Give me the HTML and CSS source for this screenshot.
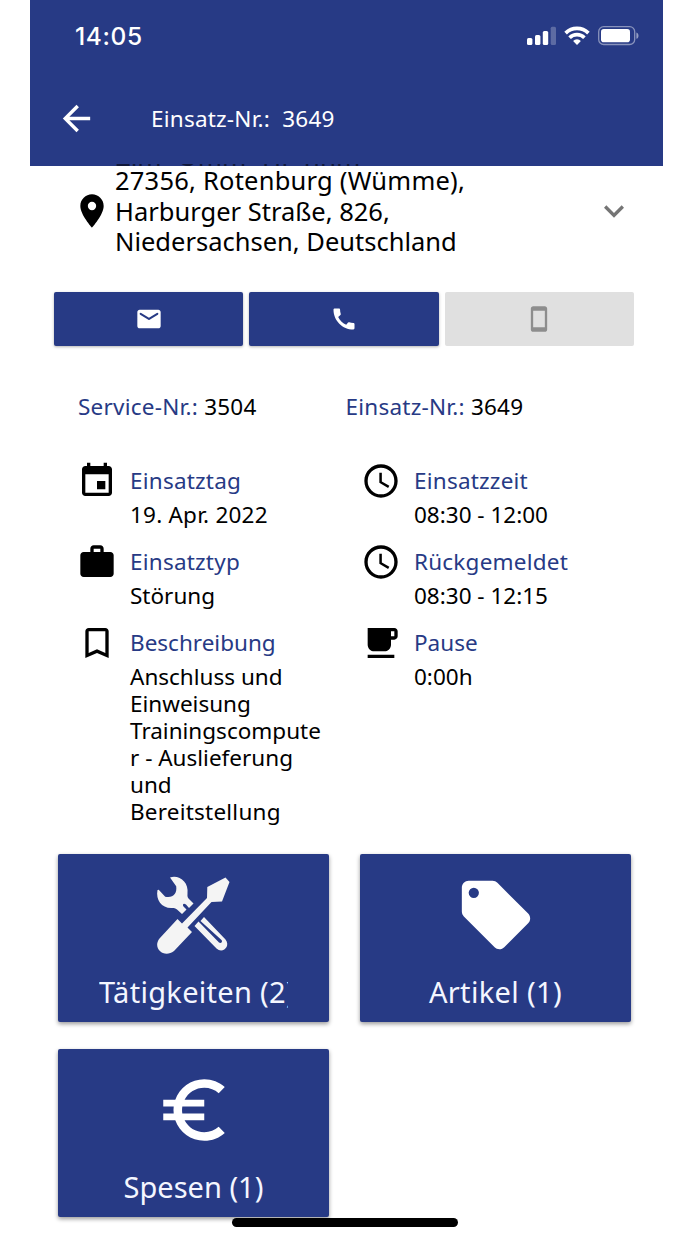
FILE: index.html
```html
<!DOCTYPE html>
<html lang="de">
<head>
  <meta charset="UTF-8">
  <title>Einsatz-Nr.: 3649</title>
  <meta name="viewport" content="width=device-width, initial-scale=1.0">
  <link rel="stylesheet" href="styles.css">
</head>
<body>
  <div class="phone">
    <header>
      <div class="statusbar">
        <span class="time">14:05</span>
        <svg class="signal" width="29" height="19" viewBox="0 0 29 19" fill="#fff">
          <rect x="0" y="12" width="5.4" height="7" rx="1.5"/>
          <rect x="8" y="9" width="5.4" height="10" rx="1.5"/>
          <rect x="15.8" y="5" width="5.4" height="14" rx="1.5"/>
          <rect x="23.7" y="0.8" width="5.3" height="18.2" rx="1.5" opacity=".25"/>
        </svg>
        <svg class="wifi" width="26" height="19" viewBox="0 0 26 19" fill="none" stroke="#fff" stroke-width="3.7">
          <path d="M1.6 7.100a16.200 16.200 0 0 1 22.800 0"/>
          <path d="M5.600 11.700a10.600 10.600 0 0 1 14.800 0"/>
          <path d="M13 19l-3.900-4.100a5.600 5.600 0 0 1 7.800 0z" fill="#fff" stroke="none"/>
        </svg>
        <svg class="battery" width="41" height="20" viewBox="0 0 41 20">
          <rect x=".7" y=".7" width="36" height="17.8" rx="5" fill="none" stroke="#fff" stroke-opacity=".45" stroke-width="1.3"/>
          <rect x="3" y="3" width="29" height="13.2" rx="2.8" fill="#fff"/>
          <path d="M38.4 6.5c2.8 1 2.8 5.3 0 6.3z" fill="#fff" opacity=".5"/>
        </svg>
      </div>
      <div class="toolbar">
        <svg class="back" width="41" height="41" viewBox="0 0 24 24" fill="#fff"><path d="M20 11H7.83l5.59-5.59L12 4l-8 8 8 8 1.41-1.41L7.83 13H20v-2z"/></svg>
        <h1>Einsatz-Nr.:&nbsp; 3649</h1>
      </div>
      <!-- row scrolled under the toolbar -->
      <div class="scrolled"><span>•</span><span>Zim Omm Hi nnm</span></div>
    </header>

    <section class="address">
      <svg class="pin" width="40" height="40" viewBox="0 0 24 24"><path d="M12 2C8.13 2 5 5.13 5 9c0 5.25 7 13 7 13s7-7.75 7-13c0-3.87-3.13-7-7-7zm0 9.5a2.5 2.5 0 1 1 0-5 2.5 2.5 0 0 1 0 5z"/></svg>
      <p><span class="wide">27356, Rotenburg (Wümme),</span><br>Harburger Straße, 826,<br>Niedersachsen, Deutschland</p>
      <svg class="more" width="40" height="40" viewBox="0 0 24 24" fill="#757575"><path d="M7.41 8.59L12 13.17l4.59-4.58L18 10l-6 6-6-6z"/></svg>
    </section>

    <div class="contact">
      <button><svg width="28" height="28" viewBox="0 0 24 24" fill="#fff"><path d="M20 4H4c-1.1 0-2 .9-2 2v12c0 1.100.9 2 2 2h16c1.100 0 2-.9 2-2V6c0-1.100-.9-2-2-2zm-.4 4.250l-7.070 4.420c-.32.2-.74.2-1.060 0L4.400 8.250a.85.85 0 1 1 .9-1.440L12 11l6.700-4.190a.85.85 0 1 1 .9 1.440z"/></svg></button>
      <button><svg width="28" height="28" viewBox="0 0 24 24" fill="#fff"><path d="M20.010 15.380c-1.230 0-2.420-.2-3.530-.56a.98.98 0 0 0-1.010.24l-1.570 1.970c-2.830-1.350-5.480-3.900-6.890-6.830l1.950-1.660c.27-.28.35-.67.24-1.020-.37-1.110-.56-2.300-.56-3.530 0-.54-.45-.99-.99-.99H4.190C3.650 3 3 3.240 3 3.990 3 13.280 10.730 21 20.010 21c.71 0 .99-.63.99-1.180v-3.450c0-.54-.45-.99-.99-.99z"/></svg></button>
      <button disabled><svg width="28" height="28" viewBox="0 0 24 24" fill="#8d8d8d"><path d="M17 1.010L7 1c-1.100 0-2 .9-2 2v18c0 1.100.9 2 2 2h10c1.100 0 2-.9 2-2V3c0-1.100-.9-1.990-2-1.990zM17 19H7V5h10v14z"/></svg></button>
    </div>

    <div class="numbers">
      <div><span class="label">Service-Nr.:</span> 3504</div>
      <div><span class="label">Einsatz-Nr.:</span> 3649</div>
    </div>

    <div class="details">
      <div class="col">
        <div class="item">
          <svg width="40" height="40" viewBox="0 0 24 24"><path d="M17 12h-5v5h5v-5zM16 1v2H8V1H6v2H5c-1.110 0-1.990.9-1.990 2L3 19c0 1.100.89 2 2 2h14c1.100 0 2-.9 2-2V5c0-1.100-.9-2-2-2h-1V1h-2zm3 18H5V8h14v11z"/></svg>
          <div><h3 class="wide">Einsatztag</h3><p class="wide">19. Apr. 2022</p></div>
        </div>
        <div class="item">
          <svg width="40" height="40" viewBox="0 0 24 24"><path d="M20 6h-4V4c0-1.110-.89-2-2-2h-4c-1.110 0-2 .89-2 2v2H4c-1.110 0-2 .89-2 2v11c0 1.110.89 2 2 2h16c1.110 0 2-.89 2-2V8c0-1.110-.89-2-2-2zm-6 0h-4V4h4v2z"/></svg>
          <div><h3 class="wide">Einsatztyp</h3><p>Störung</p></div>
        </div>
        <div class="item">
          <svg width="40" height="40" viewBox="0 0 24 24"><path d="M17 3H7c-1.100 0-1.990.9-1.990 2L5 21l7-3 7 3V5c0-1.100-.9-2-2-2zm0 15l-5-2.180L7 18V5h10v13z"/></svg>
          <div><h3>Beschreibung</h3><p>Anschluss und<br>Einweisung<br>Trainingscompute<br>r - Auslieferung<br>und<br><span class="wide">Bereitstellung</span></p></div>
        </div>
      </div>
      <div class="col">
        <div class="item">
          <svg width="40" height="40" viewBox="0 0 24 24"><path d="M11.990 2C6.470 2 2 6.480 2 12s4.470 10 9.990 10C17.520 22 22 17.520 22 12S17.520 2 11.990 2zM12 20a8 8 0 1 1 0-16 8 8 0 0 1 0 16zm.5-13H11v6l5.250 3.150.75-1.230-4.500-2.670z"/></svg>
          <div><h3 class="wide">Einsatzzeit</h3><p>08:30 - 12:00</p></div>
        </div>
        <div class="item">
          <svg width="40" height="40" viewBox="0 0 24 24"><path d="M11.990 2C6.470 2 2 6.480 2 12s4.470 10 9.990 10C17.520 22 22 17.520 22 12S17.520 2 11.990 2zM12 20a8 8 0 1 1 0-16 8 8 0 0 1 0 16zm.5-13H11v6l5.250 3.150.75-1.230-4.500-2.670z"/></svg>
          <div><h3 class="wide">Rückgemeldet</h3><p>08:30 - 12:15</p></div>
        </div>
        <div class="item">
          <svg width="40" height="40" viewBox="0 0 24 24"><path d="M20 3H4v10c0 2.210 1.790 4 4 4h6c2.210 0 4-1.790 4-4v-3h2c1.110 0 2-.9 2-2V5c0-1.110-.89-2-2-2zm0 5h-2V5h2v3zM4 19h16v2H4z"/></svg>
          <div><h3>Pause</h3><p>0:00h</p></div>
        </div>
      </div>
    </div>

    <div class="tiles">
      <div class="tile">
        <svg width="82" height="82" viewBox="0 0 82 82" fill="#f4f4f4">
          <path d="M17 3.500C26 .5 36 8 34.500 19.500c-.2 3 0 4 2 6l4 4-4.500 4.500-3-3.500c-2.500-2-4 0-2.500 2l3 3-4.500 4.500-5-4.500c-1.500-1.500-3-1.500-5-1.500C9 34.500 2.500 26 4.500 16l1.200-.3 6.500 7c8 1.500 12-3 11-10.500z"/>
          <path d="M72.500 3.500l4 4.500-7.500 19.500-10.500.5-24 25.500 4.500 4.500-18 19C11 85-1 74 6.500 64.500l18-19.500 4.500 4.500L54 24l.3-11z"/>
          <path d="M51 43l21.500 22.500c5.500 7-3 14.500-9 9L41.500 52l4-4.500 20.500 21c2 1.500 4-1 2.500-2.500l-21-19z"/>
        </svg>
        <span class="clip">Tätigkeiten (2)</span>
      </div>
      <div class="tile">
        <svg width="82" height="82" viewBox="0 0 24 24" fill="#fff"><path d="M21.410 11.580l-9-9C12.050 2.220 11.550 2 11 2H4c-1.100 0-2 .9-2 2v7c0 .55.22 1.050.59 1.420l9 9c.36.36.86.58 1.410.58.55 0 1.050-.22 1.410-.59l7-7c.37-.36.59-.86.59-1.410 0-.55-.23-1.060-.59-1.420zM5.500 7a1.500 1.500 0 1 1 0-3 1.500 1.500 0 0 1 0 3z"/></svg>
        <span class="artikel">Artikel (1)</span>
      </div>
      <div class="tile">
        <svg width="82" height="82" viewBox="0 0 24 24" fill="#fff"><path d="M15 18.500c-2.510 0-4.680-1.420-5.760-3.500H15v-2H8.580c-.05-.33-.08-.66-.08-1s.03-.67.08-1H15V9H9.240C10.320 6.920 12.500 5.500 15 5.500c1.610 0 3.090.59 4.230 1.570L21 5.300C19.410 3.870 17.300 3 15 3c-3.920 0-7.240 2.510-8.480 6H3v2h3.060a8.262 8.262 0 0 0 0 2H3v2h3.520c1.240 3.490 4.560 6 8.480 6 2.310 0 4.410-.87 6-2.300l-1.780-1.770c-1.130.98-2.600 1.570-4.220 1.570z"/></svg>
        <span>Spesen (1)</span>
      </div>
    </div>
    <div class="home-indicator"></div>
  </div>
</body>
</html>
```
FILE: styles.css
```css
body {
  margin: 0;
  background: #fff;
  color: #000;
  font-family: "Noto Sans", "Open Sans", sans-serif;
  font-size: 22.5px;
  line-height: 27px;
}
h1, h3, p {
  margin: 0;
  font-weight: normal;
}
svg {
  display: block;
  flex: none;
}
.wide {
  letter-spacing: 0.22px;
}
.phone {
  position: relative;
  box-sizing: border-box;
  width: 633px;
  height: 1244px;
  margin-left: 30px;
  overflow: hidden;
}
header {
  height: 165.5px;
  overflow: hidden;
  background: #273a85;
  color: #fff;
}
.statusbar {
  display: flex;
  align-items: center;
  height: 71px;
  padding: 0 24px 0 45px;
}
.time {
  flex: 1;
  padding-top: 2px;
  font-family: Inter, sans-serif;
  font-size: 24.5px;
  font-weight: 500;
  letter-spacing: 0.6px;
}
.wifi {
  margin: 0 8px;
}
.toolbar {
  display: flex;
  align-items: center;
  height: 93px;
  padding: 1px 0 0 26px;
  box-sizing: border-box;
}
.toolbar h1 {
  margin-left: 54px;
  font-size: 22.5px;
  letter-spacing: 0.22px;
}
.scrolled {
  display: flex;
  gap: 13px;
  height: 2px;
  padding-left: 63px;
  overflow: hidden;
  font-size: 26px;
  line-height: 30px;
  word-spacing: 9px;
  color: #10183a;
}
.scrolled span {
  margin-top: -23px;
}
.address {
  display: flex;
  align-items: center;
  height: 91px;
  padding-left: 42px;
  font-size: 25.5px;
  line-height: 30.4px;
}
.address p {
  flex: 1;
  margin-left: 3px;
  white-space: nowrap;
}
.more {
  margin-right: 29px;
}
.contact {
  display: flex;
  gap: 6px;
  margin: 35.5px 29px 0 24px;
}
.contact button {
  display: flex;
  flex: 1;
  align-items: center;
  justify-content: center;
  height: 54px;
  padding: 0;
  border: none;
  border-radius: 2px;
  background: #273a85;
  box-shadow: 0 1px 3px rgba(0,0,0,0.3);
}
.contact button:disabled {
  background: #e0e0e0;
  box-shadow: none;
}
.numbers {
  display: flex;
  margin: 47px 0 0 48px;
  letter-spacing: 0.24px;
}
.numbers div {
  width: 267.5px;
}
.label, h3 {
  color: #273a85;
}
.details {
  display: flex;
  height: 393px;
  margin: 41px 0 0 47px;
}
.col {
  width: 284px;
}
.item {
  display: flex;
  gap: 13px;
  margin-bottom: 14px;
}
.item h3 {
  margin: 6px 0 7px;
  font-size: 22.5px;
}
.item p {
  white-space: nowrap;
}
.tiles {
  display: grid;
  grid-template-columns: 271px 271px;
  gap: 27px 31px;
  margin-left: 28px;
}
.tile {
  display: flex;
  flex-direction: column;
  align-items: center;
  height: 148px;
  padding-top: 20px;
  border-radius: 2px;
  background: #273a85;
  box-shadow: 0 2px 4px rgba(0,0,0,0.4);
  color: #f4f6ff;
  font-size: 29px;
  line-height: 40px;
}
.tile span {
  margin-top: 16px;
  white-space: nowrap;
}
.tile .clip {
  width: 189px;
  overflow: hidden;
  letter-spacing: 0.3px;
}
.tile .artikel {
  letter-spacing: 0.35px;
}
.home-indicator {
  position: absolute;
  left: 202px;
  bottom: 17px;
  width: 226px;
  height: 9px;
  border-radius: 5px;
  background: #000;
}
```
